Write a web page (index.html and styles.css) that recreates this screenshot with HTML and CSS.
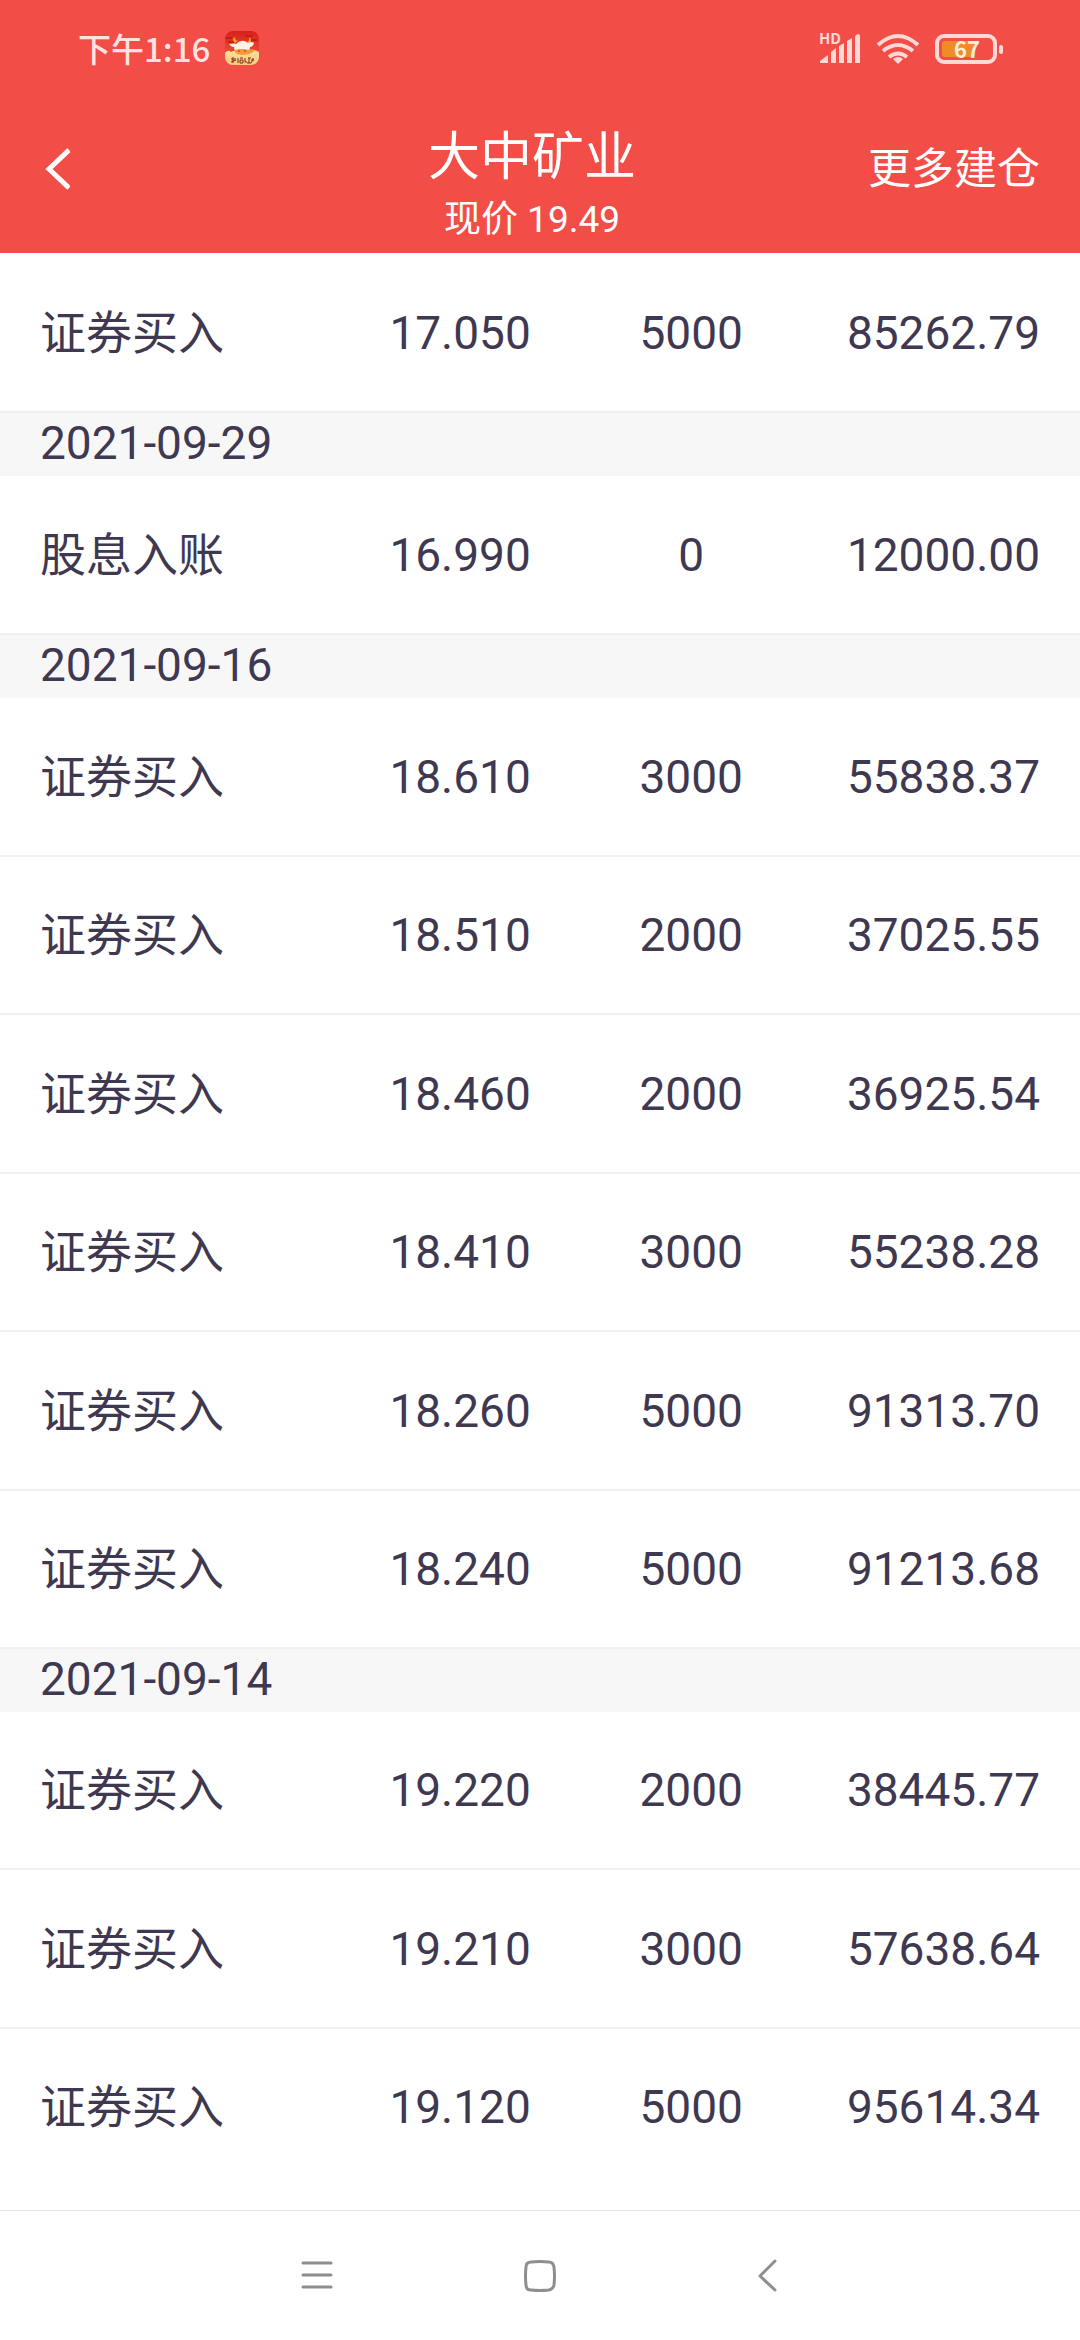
FILE: index.html
```html
<!DOCTYPE html>
<html lang="zh-CN">
<head>
<meta charset="utf-8">
<meta name="viewport" content="width=device-width, initial-scale=1">
<title>大中矿业</title>
<link rel="stylesheet" href="styles.css">
</head>
<body>
<div class="app">
  <header class="top">
    <div class="status">
      <div class="status-left">
        <time class="clock">下午1:16</time>
        <svg class="app-icon" width="34" height="34" viewBox="0 0 34 34" aria-hidden="true">
          <defs>
            <clipPath id="tile"><rect width="34" height="34" rx="8"/></clipPath>
            <linearGradient id="sky" x2="0" y2="1"><stop offset="0" stop-color="#d91f1c"/><stop offset="1" stop-color="#f5653c"/></linearGradient>
            <linearGradient id="ground" x2="0" y2="1"><stop offset="0" stop-color="#fde0a0"/><stop offset="1" stop-color="#fbc878"/></linearGradient>
          </defs>
          <g clip-path="url(#tile)">
            <rect width="34" height="34" fill="url(#sky)"/>
            <path d="M0 7h7M3 11h6M20 5h8M26 9h6" stroke="#c41c1a" stroke-width="2"/>
            <path d="M0 22q3-4 6-1 5-3 9 1h9q4-5 10-1v13H0z" fill="url(#ground)"/>
            <path d="M10 12q-4-4 0-6 0 4 3 4M22 11q3-1 2-5 4 3 0 7" fill="#f5a623"/>
            <path d="M4 13q6-1 7 0 6-6 12-1 4-2 6 0-1 4-4 4 0 4-3 5H12q-3-1-3-5-4 0-5-4z" fill="#fff1e3"/>
            <path d="M10 19q6-2 14 0 5-2 5 1-3 4-13 4-7-1-6-5z" fill="#f39a3e"/>
            <path d="M13 20h2M19 20h2" stroke="#963b1e" stroke-width="1"/>
            <path d="M6 28h5M8 26v6M6 31l5-2M13 27v5M15 27h3M15 29h3v3h-3zM20 27v4h2M23 27h3M24 27v5M22 32h4M28 27v2l-2 3M26 29h3" fill="none" stroke="#7b2f16" stroke-width="1"/>
          </g>
        </svg>
      </div>
      <svg class="status-icons" width="186" height="46" viewBox="0 -6 186 46" role="img" aria-label="HD 信号 WiFi 电量 67%">
        <g fill="#ffd9d6">
          <text class="hd" x="0" y="13">HD</text>
          <path d="M1 32v-2l8-6v8zM12 32V21l5-4v15zM20 32V15l5-3v20zM28 32V10l5-3v25zM36 32V6q0-2 3-3 2 0 2 2v27z"/>
          <path d="M79 33l-5-5q5-4 10 0z"/>
          <rect x="180" y="14" width="4" height="9" rx="2"/>
        </g>
        <g fill="none" stroke="#ffd9d6">
          <path d="M59 14q20-18 40 0M64 20q15-12 30 0M70 26q9-7 18 0" stroke-width="4"/>
          <rect x="118" y="5" width="58" height="26" rx="7" stroke-width="4"/>
        </g>
        <rect x="123" y="10" width="33" height="16" rx="3" fill="#f08c28"/>
        <text class="charge" x="148" y="27" text-anchor="middle">67</text>
      </svg>
    </div>
    <nav class="titlebar">
      <button class="back" type="button" aria-label="返回">
        <svg width="26" height="42" viewBox="0 0 26 42"><path d="M25 2L5 21l20 19" fill="none" stroke="#fff" stroke-width="5"/></svg>
      </button>
      <div class="heading">
        <h1 class="name">大中矿业</h1>
        <p class="price">现价 19.49</p>
      </div>
      <a class="more" href="#more">更多建仓</a>
    </nav>
  </header>
  <main class="list">
    <table class="trades">
      <colgroup><col class="c-type"><col class="c-price"><col class="c-qty"><col class="c-sum"></colgroup>
      <tbody>
        <tr class="trade"><td>证券买入</td><td>17.050</td><td>5000</td><td>85262.79</td></tr>
        <tr class="date"><th colspan="4" scope="rowgroup">2021-09-29</th></tr>
        <tr class="trade"><td>股息入账</td><td>16.990</td><td>0</td><td>12000.00</td></tr>
        <tr class="date"><th colspan="4" scope="rowgroup">2021-09-16</th></tr>
        <tr class="trade"><td>证券买入</td><td>18.610</td><td>3000</td><td>55838.37</td></tr>
        <tr class="trade"><td>证券买入</td><td>18.510</td><td>2000</td><td>37025.55</td></tr>
        <tr class="trade"><td>证券买入</td><td>18.460</td><td>2000</td><td>36925.54</td></tr>
        <tr class="trade"><td>证券买入</td><td>18.410</td><td>3000</td><td>55238.28</td></tr>
        <tr class="trade"><td>证券买入</td><td>18.260</td><td>5000</td><td>91313.70</td></tr>
        <tr class="trade"><td>证券买入</td><td>18.240</td><td>5000</td><td>91213.68</td></tr>
        <tr class="date"><th colspan="4" scope="rowgroup">2021-09-14</th></tr>
        <tr class="trade"><td>证券买入</td><td>19.220</td><td>2000</td><td>38445.77</td></tr>
        <tr class="trade"><td>证券买入</td><td>19.210</td><td>3000</td><td>57638.64</td></tr>
        <tr class="trade"><td>证券买入</td><td>19.120</td><td>5000</td><td>95614.34</td></tr>
      </tbody>
    </table>
  </main>
  <nav class="sysnav" aria-label="系统导航">
    <button type="button" aria-label="最近任务"><svg width="48" height="36" viewBox="0 0 48 36"><path d="M15 5h28M15 17h28M15 29h28"/></svg></button>
    <button type="button" aria-label="主屏幕"><svg width="48" height="36" viewBox="0 0 48 36"><path d="M15 4Q24 3 33 4 37 4 38 9 39 18 38 27 37 31 33 32 24 33 15 32 10 32 10 27 9 18 10 9 10 4 15 4z"/></svg></button>
    <button type="button" aria-label="返回上一页"><svg width="48" height="36" viewBox="0 0 48 36"><path d="M31 3L16 18l15 14"/></svg></button>
  </nav>
</div>
</body>
</html>
```
FILE: styles.css
```css
* { box-sizing: border-box; }
body {
  margin: 0;
  background: #fff;
  color: #3e3851;
  font-family: Roboto, "Noto Sans CJK SC", sans-serif;
  font-size: 46px;
}
button { margin: 0; padding: 0; border: 0; background: none; }
svg { display: block; }
.app { display: flex; flex-direction: column; min-height: 100vh; }

.top { background: #f24d46; color: #fff; padding-bottom: 11px; }
.status {
  display: flex;
  align-items: center;
  justify-content: space-between;
  height: 96px;
  padding: 0 75px 0 78px;
}
.status-left { display: flex; align-items: center; gap: 15px; }
.clock {
  color: #ffe3e1;
  font: 500 33px/48px "Noto Sans CJK SC", sans-serif;
}
.hd { font: 700 15px "Noto Sans CJK SC", sans-serif; }
.charge { font: 700 22px "Noto Sans CJK SC", sans-serif; fill: #fff0dc; }

.titlebar {
  display: grid;
  grid-template-columns: 1fr auto 1fr;
  align-items: center;
  padding: 0 40px 0 24px;
}
.back { justify-self: start; padding-left: 20px; }
.heading { padding-top: 26px; text-align: center; }
.name, .price { margin: 0; font-weight: 400; }
.name { margin-bottom: 4px; font-size: 52px; line-height: 72px; }
.price { font-size: 37px; line-height: 44px; }
.more {
  justify-self: end;
  color: #fff;
  font-size: 43px;
  line-height: 60px;
  text-decoration: none;
}

.list { flex: 1; padding-top: 1px; }
.trades { width: 100%; border-collapse: separate; border-spacing: 0; table-layout: fixed; line-height: 60px; }
.c-type { width: 34%; }
.c-price { width: 17%; }
.c-qty { width: 26%; }
.c-sum { width: 23%; }
.trade td {
  height: 159px;
  padding: 0;
  border-bottom: 2px solid #f0f0f1;
  text-align: right;
}
.trade:nth-child(even) td { height: 158px; }
.trade:last-child td { border-bottom-color: transparent; }
.trade td:first-child { padding-left: 40px; text-align: left; }
.trade td:nth-child(2) { padding-right: 20px; }
.trade td:nth-child(3) { text-align: center; }
.trade td:last-child { padding-right: 40px; }
.date th {
  height: 63px;
  padding: 0 40px 3px;
  background: #f7f7f8;
  font-weight: 400;
  text-align: left;
}

.sysnav {
  display: flex;
  justify-content: center;
  gap: 180px;
  height: 130px;
  border-top: 1px solid #e2e2e2;
}
.sysnav svg { fill: none; stroke: #8e8e8e; stroke-width: 3; stroke-linecap: round; stroke-linejoin: round; }
```
